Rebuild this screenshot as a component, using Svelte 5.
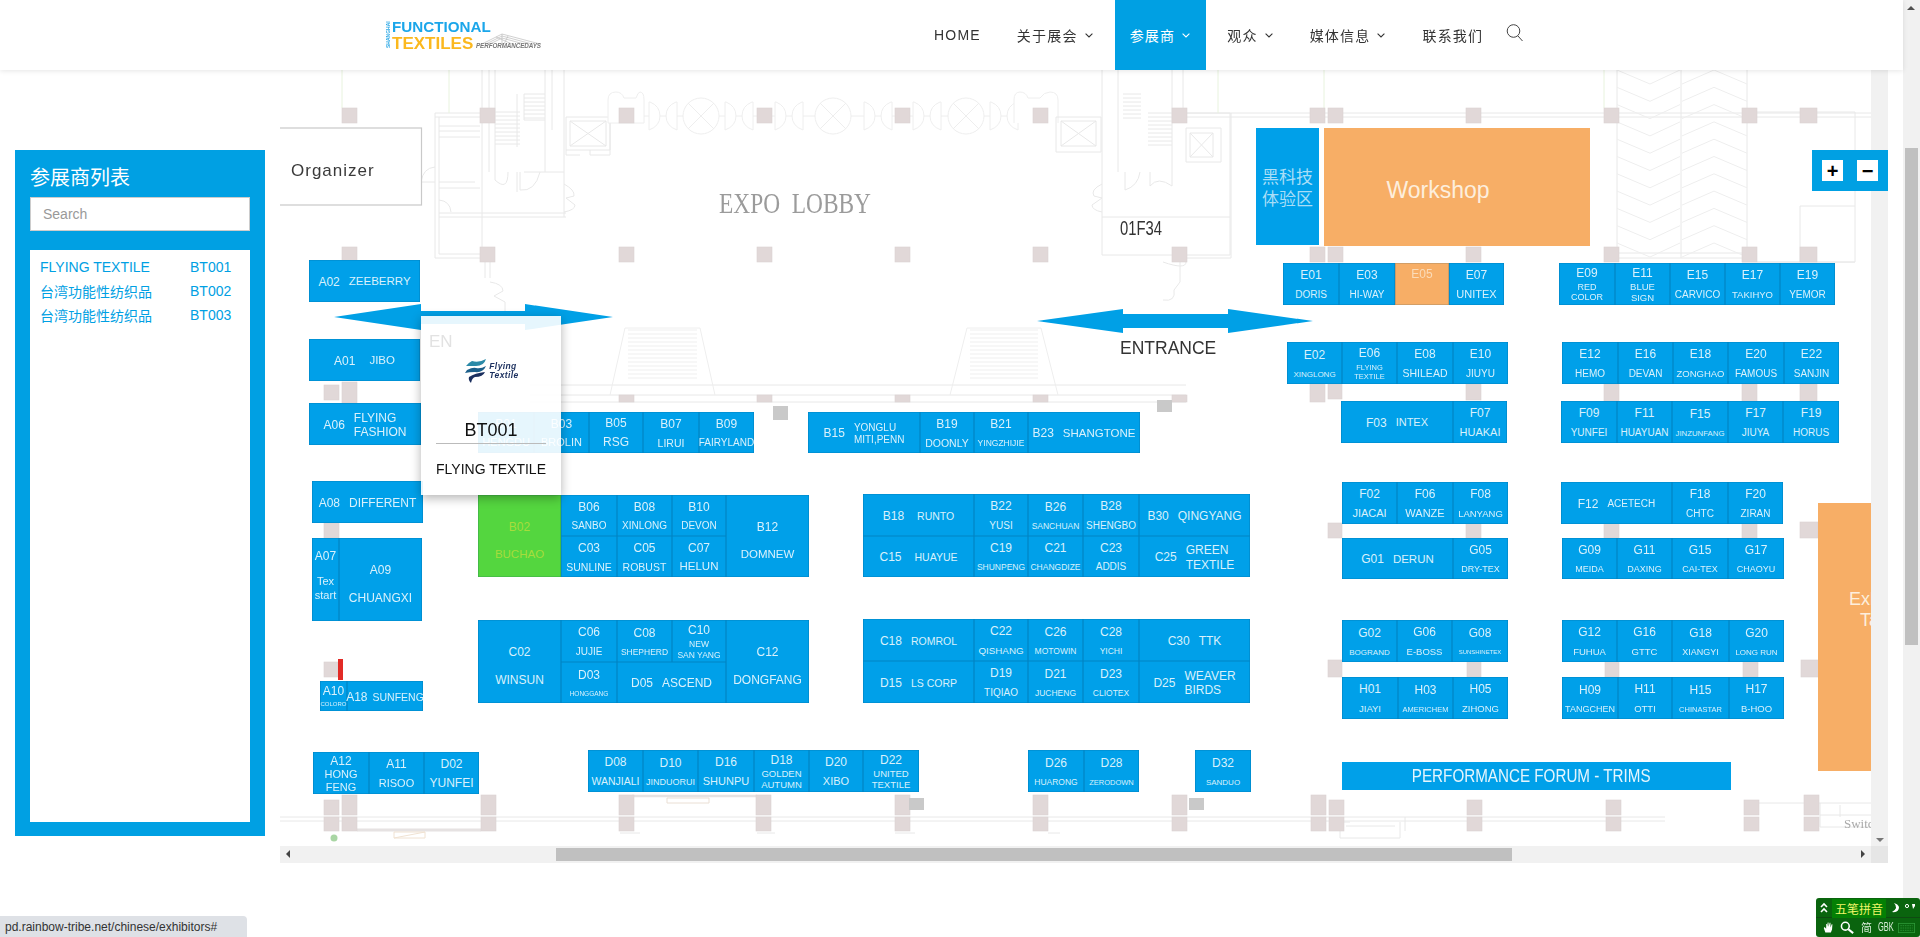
<script lang="ts">
  // map canvas is laid out in the plan's own coordinates, origin is the top left of the visible part
  const OX = 280;
  const OY = 70;

  type Item = [string, string, number?, boolean?, string?, number?];

  function strip(y1: number, y2: number, xs: number[], items: Item[]) {
    return items.map((it, i) => ({
      code: it[0],
      lines: it[1].split("|"),
      fs: it[2] ?? 10,
      row: it[3] ?? false,
      tone: it[4] ?? "",
      gap: it[5] ?? 9,
      x: xs[i] - OX,
      y: y1 - OY,
      w: xs[i + 1] - xs[i],
      h: y2 - y1
    }));
  }

  const booths = [
    ...strip(260, 302, [309, 420], [["A02", "ZEEBERRY", 11.5, true, "", 9]]),
    ...strip(339, 381, [309, 420], [["A01", "JIBO", 11.5, true, "", 14]]),
    ...strip(403, 445, [309, 421], [["A06", "FLYING|FASHION", 12, true]]),
    ...strip(481, 523, [312, 423], [["A08", "DIFFERENT", 12, true]]),
    ...strip(538, 621, [312, 339, 422], [["A07", "Tex|start", 11, false, "stack"], ["A09", "CHUANGXI", 12, false, "tall"]]),
    ...strip(681, 711, [320, 347, 423], [["A10", "COLORO", 6], ["A18", "SUNFENG", 10.5, true, "", 5]]),
    ...strip(752, 794, [313, 369, 424, 479], [["A12", "HONG|FENG", 11], ["A11", "RISOO", 11], ["D02", "YUNFEI", 12]]),
    ...strip(750, 792, [588, 643, 698, 754, 809, 863, 919], [
      ["D08", "WANJIALI", 10.5], ["D10", "JINDUORUI", 9], ["D16", "SHUNPU", 11],
      ["D18", "GOLDEN|AUTUMN", 9.5], ["D20", "XIBO", 11], ["D22", "UNITED|TEXTILE", 9.5]
    ]),
    ...strip(412, 453, [478, 534, 589, 643, 699, 754], [
      ["B01", "HENGDU", 11], ["B03", "BROLIN", 11], ["B05", "RSG", 12], ["B07", "LIRUI", 10.5], ["B09", "FAIRYLAND", 10]
    ]),
    ...strip(412, 453, [808, 920, 974, 1028, 1140], [
      ["B15", "YONGLU|MITI,PENN", 10, true], ["B19", "DOONLY", 10.5], ["B21", "YINGZHIJIE", 8.5], ["B23", "SHANGTONE", 11.5, true]
    ]),
    ...strip(495, 577, [478, 561], [["B02", "BUCHAO", 11.5, false, "green tall"]]),
    ...strip(495, 536, [561, 617, 672, 726], [["B06", "SANBO", 10], ["B08", "XINLONG", 10], ["B10", "DEVON", 10]]),
    ...strip(536, 577, [561, 617, 672, 726], [["C03", "SUNLINE", 10.5], ["C05", "ROBUST", 10.5], ["C07", "HELUN", 11.5]]),
    ...strip(495, 577, [726, 809], [["B12", "DOMNEW", 11.5, false, "tall"]]),
    ...strip(620, 703, [478, 561], [["C02", "WINSUN", 12, false, "tall"]]),
    ...strip(620, 662, [561, 617, 672, 726], [["C06", "JUJIE", 10], ["C08", "SHEPHERD", 8.5], ["C10", "NEW|SAN YANG", 8.5]]),
    ...strip(662, 703, [561, 617, 726], [["D03", "HONGGANG", 6.5], ["D05", "ASCEND", 12, true]]),
    ...strip(620, 703, [726, 809], [["C12", "DONGFANG", 12, false, "tall"]]),
    ...strip(494, 536, [863, 974, 1028, 1083, 1139, 1250], [
      ["B18", "RUNTO", 10.5, true, "", 13], ["B22", "YUSI", 10], ["B26", "SANCHUAN", 8.5], ["B28", "SHENGBO", 10], ["B30", "QINGYANG", 12, true]
    ]),
    ...strip(536, 577, [863, 974, 1028, 1083, 1139, 1250], [
      ["C15", "HUAYUE", 10.5, true, "", 13], ["C19", "SHUNPENG", 8.5], ["C21", "CHANGDIZE", 8.5], ["C23", "ADDIS", 10], ["C25", "GREEN|TEXTILE", 12, true]
    ]),
    ...strip(619, 661, [863, 974, 1028, 1083, 1139, 1250], [
      ["C18", "ROMROL", 10.5, true], ["C22", "QISHANG", 9.8], ["C26", "MOTOWIN", 8.5], ["C28", "YICHI", 8.5], ["C30", "TTK", 12, true]
    ]),
    ...strip(661, 703, [863, 974, 1028, 1083, 1139, 1250], [
      ["D15", "LS CORP", 10.5, true], ["D19", "TIQIAO", 10], ["D21", "JUCHENG", 8.5], ["D23", "CLIOTEX", 8.5], ["D25", "WEAVER|BIRDS", 12, true]
    ]),
    ...strip(750, 792, [1028, 1084, 1139], [["D26", "HUARONG", 8.5], ["D28", "ZERODOWN", 7.5]]),
    ...strip(750, 792, [1195, 1251], [["D32", "SANDUO", 8]]),
    ...strip(263, 305, [1283, 1339, 1395, 1449, 1504], [
      ["E01", "DORIS", 10], ["E03", "HI-WAY", 10], ["E05", "", 10, false, "orange"], ["E07", "UNITEX", 11]
    ]),
    ...strip(263, 305, [1559, 1615, 1670, 1725, 1780, 1835], [
      ["E09", "RED|COLOR", 9], ["E11", "BLUE|SIGN", 9.5], ["E15", "CARVICO", 10], ["E17", "TAKIHYO", 9.5], ["E19", "YEMOR", 10]
    ]),
    ...strip(342, 384, [1287, 1342, 1397, 1453, 1508], [
      ["E02", "XINGLONG", 8], ["E06", "FLYING|TEXTILE", 7.5], ["E08", "SHILEAD", 10.5], ["E10", "JIUYU", 10]
    ]),
    ...strip(342, 384, [1562, 1618, 1673, 1728, 1784, 1839], [
      ["E12", "HEMO", 10], ["E16", "DEVAN", 10], ["E18", "ZONGHAO", 9.5], ["E20", "FAMOUS", 10], ["E22", "SANJIN", 10]
    ]),
    ...strip(401, 443, [1341, 1453, 1507], [["F03", "INTEX", 11, true], ["F07", "HUAKAI", 11]]),
    ...strip(401, 443, [1561, 1617, 1672, 1728, 1783, 1839], [
      ["F09", "YUNFEI", 10], ["F11", "HUAYUAN", 10], ["F15", "JINZUNFANG", 7.8], ["F17", "JIUYA", 10], ["F19", "HORUS", 10]
    ]),
    ...strip(482, 524, [1342, 1397, 1453, 1508], [["F02", "JIACAI", 11], ["F06", "WANZE", 11], ["F08", "LANYANG", 9.5]]),
    ...strip(482, 524, [1561, 1672, 1728, 1783], [["F12", "ACETECH", 10, true], ["F18", "CHTC", 10], ["F20", "ZIRAN", 10]]),
    ...strip(538, 579, [1342, 1453, 1508], [["G01", "DERUN", 11.5, true], ["G05", "DRY-TEX", 9]]),
    ...strip(538, 579, [1562, 1617, 1672, 1728, 1784], [["G09", "MEIDA", 9], ["G11", "DAXING", 9], ["G15", "CAI-TEX", 9], ["G17", "CHAOYU", 9]]),
    ...strip(620, 662, [1342, 1397, 1452, 1508], [["G02", "BOGRAND", 8], ["G06", "E-BOSS", 9.5], ["G08", "SUNSHINETEX", 6]]),
    ...strip(620, 662, [1562, 1617, 1672, 1729, 1784], [["G12", "FUHUA", 9.5], ["G16", "GTTC", 9.5], ["G18", "XIANGYI", 9], ["G20", "LONG RUN", 8]]),
    ...strip(677, 719, [1342, 1398, 1453, 1508], [["H01", "JIAYI", 9.5], ["H03", "AMERICHEM", 7.5], ["H05", "ZIHONG", 9.5]]),
    ...strip(677, 719, [1562, 1618, 1672, 1729, 1784], [["H09", "TANGCHEN", 9], ["H11", "OTTI", 9.5], ["H15", "CHINASTAR", 7.5], ["H17", "B-HOO", 9.5]])
  ];

  // pillars [x, y, w, h], page coordinates
  const colsA = [342, 480, 619, 757, 895, 1033, 1172, 1310, 1328, 1466, 1604, 1742];
  const pillars = [
    ...colsA.map((x) => [x, 108, 15, 15]),
    [1800, 108, 17, 15],
    ...colsA.map((x) => [x, 247, 15, 15]),
    [1800, 247, 17, 15],
    [324, 385, 15, 15], [342, 382, 15, 21], [619, 395, 15, 7], [757, 395, 15, 7], [895, 395, 15, 7], [1033, 395, 15, 7],
    [1172, 395, 15, 7], [1310, 384, 15, 18], [1328, 384, 14, 15], [1466, 384, 15, 16], [1604, 384, 15, 17], [1742, 384, 15, 17], [1800, 384, 17, 17],
    [324, 523, 15, 15], [1328, 523, 14, 15], [1466, 523, 15, 15], [1604, 523, 15, 15], [1742, 523, 15, 15], [1800, 522, 18, 16],
    [324, 662, 14, 15], [1328, 660, 14, 17], [1467, 660, 14, 17], [1605, 660, 14, 17], [1743, 660, 15, 17], [1801, 660, 18, 17],
    [324, 800, 15, 15], [342, 795, 15, 20], [481, 795, 15, 20], [619, 795, 15, 20], [756, 795, 15, 20], [895, 795, 15, 20],
    [1033, 795, 15, 20], [1172, 795, 15, 20], [1311, 795, 15, 20], [1329, 800, 15, 15], [1467, 800, 15, 15], [1606, 800, 15, 15], [1744, 800, 15, 15], [1804, 795, 15, 20],
    [324, 817, 15, 14], [342, 817, 15, 14], [481, 817, 15, 14], [619, 817, 15, 14], [756, 817, 15, 14], [895, 817, 15, 14],
    [1033, 817, 15, 14], [1172, 817, 15, 14], [1311, 817, 15, 14], [1329, 817, 15, 14], [1467, 817, 15, 14], [1606, 817, 15, 14], [1744, 817, 15, 14], [1804, 817, 15, 14]
  ];
  const greys = [[773, 406, 15, 14], [1157, 400, 15, 12], [909, 798, 15, 12], [1189, 798, 15, 12]];

  // D shaped door pairs in the lobby wall
  const doorPairs = [649, 725, 775, 864, 913, 990];
  const rotunda = [701, 833, 966];

  function chevrons() {
    let d = "";
    for (let y = 70; y < 250; y += 17.3) {
      d += `M1617 ${y}L1650 ${y + 14}L1680 ${y}`;
      d += `M1682 ${y + 14}L1714 ${y}L1747 ${y + 14}`;
    }
    return d;
  }

  function stairs(x1: number, x2: number, y1: number, y2: number) {
    let d = "";
    for (let y = y1; y <= y2; y += 4) d += `M${x1} ${y}H${x2}`;
    return d;
  }

  const exhibitors = [
    { name: "FLYING TEXTILE", code: "BT001" },
    { name: "台湾功能性纺织品", code: "BT002" },
    { name: "台湾功能性纺织品", code: "BT003" }
  ];

  const menu = [
    { label: "HOME", caret: false },
    { label: "关于展会", caret: true },
    { label: "参展商", caret: true, active: true },
    { label: "观众", caret: true },
    { label: "媒体信息", caret: true },
    { label: "联系我们", caret: false }
  ];
</script>

<div class="page">
  <div class="main">
    <header class="top">
      <a class="logo" href="#home">
        <span class="logo-side">SHANGHAI</span>
        <span class="logo-words">
          <span class="logo-a">FUNCTIONAL</span>
          <span class="logo-b">
            TEXTILES
            <span class="logo-perf">
              <svg width="64" height="14" viewBox="0 0 64 14">
                <path d="M6 13L26 3L64 13M10 13L26 5L56 13M14 13L26 7L48 13M26 3V13M20 6L36 13M32 5L28 13" fill="none" stroke="#bbb" stroke-width=".7" />
              </svg>
              <em>PERFORMANCEDAYS</em>
            </span>
          </span>
        </span>
      </a>
      <nav class="menu">
        {#each menu as m}
          <a href="#x" class="item" class:active={m.active}>
            {m.label}
            {#if m.caret}
              <svg class="caret" width="8" height="5" viewBox="0 0 8 5"><path d="M.6.7L4 4L7.4.7" fill="none" stroke="currentColor" stroke-width="1.1" /></svg>
            {/if}
          </a>
        {/each}
        <svg class="search" width="18" height="18" viewBox="0 0 18 18">
          <circle cx="7.5" cy="7" r="6.3" fill="none" stroke="#444" stroke-width="1" />
          <path d="M12 12L16.5 17" stroke="#444" stroke-width="1" />
        </svg>
      </nav>
    </header>

    <div class="content">
      <aside class="panel">
        <h3>参展商列表</h3>
        <input class="find" type="text" placeholder="Search" />
        <div class="list">
          {#each exhibitors as e}
            <span>{e.name}</span><span>{e.code}</span>
          {/each}
        </div>
      </aside>

      <section class="map-area">
        <div class="view">
          <div class="canvas">
            <svg class="plan" width="1591" height="776" viewBox="280 70 1591 776">
              <g fill="none" stroke="#e8e8e8" stroke-width="1">
                <!-- left core -->
                <path d="M435 113H480M435 117H480M439 126H480M439 131H480M439 137H480M435 113V258H480M439 117V254H480M439 188H480M439 182H475" />
                <path d="M439 213H566M439 217H566M564 70V217M545 70V172M552 70V130M482 70V254M489 70V172M495 70V172M517 94V147M524 94V120H545M517 172V192M524 172H564" />
                <path d="M566 117H610V150H566ZM570 121H606V146H570ZM570 121L606 146M606 121L570 146M566 150V155H580M590 150V155H610V117" />
                <path d={stairs(495, 520, 112, 147)} />
                <path d={stairs(524, 545, 94, 120)} />
                <path d="M495 172V180Q508 192 508 172M520 172V190Q535 192 540 172M564 184Q575 190 574 196L566 198L575 205Q575 210 564 212M435 167Q423 168 421 182H435M439 200Q450 201 451 212M485 258V278M490 258V278M490 282Q503 284 503 291L494 296L505 302V320M485 320H505" />
                <!-- lobby wall -->
                <g stroke="#eeeeee">
                  <path d="M610 116H1056" />
                  {#each rotunda as x}
                    <circle cx={x} cy="116" r="18" fill="#fff" />
                    <path d={`M${x - 13} 103L${x + 13} 129M${x + 13} 103L${x - 13} 129`} />
                  {/each}
                  {#each doorPairs as x}
                    <path d={`M${x} 102H${x + 1}Q${x + 11} 106 ${x + 11} 116Q${x + 11} 126 ${x} 130ZM${x + 28} 102H${x + 27}Q${x + 17} 106 ${x + 17} 116Q${x + 17} 126 ${x + 28} 130Z`} fill="#fff" />
                  {/each}
                  <path d="M608 123V100Q608 92 616 92Q622 92 624 98H636Q638 92 640 92Q644 92 644 100V123ZM1014 123V100Q1014 92 1020 92Q1026 92 1028 98H1040Q1044 92 1050 92Q1058 92 1058 100V123" fill="#fff" />
                </g>
                <!-- right core -->
                <path d="M1056 117H1101V152H1056ZM1061 121H1096V146H1061ZM1061 121L1096 146M1096 121L1061 146" />
                <path d="M1102 70V255H1230V113H1186M1102 217H1230M1118 70V172M1172 70V172M1183 70V113M1186 128H1221V162H1186ZM1190 133H1213V157H1190ZM1190 133L1213 157M1213 133L1190 157M1186 258H1231V113" />
                <path d={stairs(1123, 1141, 94, 120)} />
                <path d={stairs(1148, 1172, 113, 147)} />
                <path d="M1125 172V190Q1138 186 1140 172M1150 172V186Q1158 176 1172 186V172M1102 184Q1090 190 1094 196L1102 198L1092 205Q1092 210 1102 212M1163 262Q1186 270 1186 262M1163 300Q1176 302 1174 290L1180 282V262" />
                <!-- east wall and store rooms -->
                <path d="M1186 113H1871M1186 117H1871M1757 112H1855V262H1757M1800 206H1855M1800 206V262M1742 262H1855M1604 258H1742M1604 253H1742" />
                <path d="M1617 123V258M1681 70V258M1747 70V258M1617 70V108" />
                <path d={chevrons()} stroke="#eeeeee" />
                <!-- entrance bridges -->
                <path d="M530 385H1186M530 395H1186M530 402H1186" />
                <path d={stairs(628, 697, 330, 378)} stroke="#efefef" />
                <path d={stairs(970, 1038, 330, 378)} stroke="#efefef" />
                <path d="M625 328H700M625 328L610 395M700 328L715 395M967 328H1041M967 328L950 395M1041 328L1058 395" stroke="#eeeeee" />
                <!-- south wall -->
                <path d="M280 817H1665M280 821H1665M1744 803H1871M1820 803V827H1871M1820 815H1871M1340 822V838H1400V822M1346 826H1395M1340 822H1350M1405 817V831M620 833H640M757 833H775M895 833H915M1048 833H1060" />
                <path d="M357 830H481" stroke="#e6e2e2" stroke-width="3" />
                <path d="M632 796H757" stroke="#e6e2e2" stroke-width="2.5" />
                <path d="M667 798H709V803H667Z" stroke="#eadfd4" />
                <path d="M394 832H425V838H394ZM394 838L425 832" stroke="#f0e2d2" />
                <path d="M1840 805V817" />
              </g>
              <g stroke="#e8f3de" fill="none">
                <path d="M342 70V108M449 70V113M1218 70V113M1324 70V108M1604 70V108" />
              </g>
              <rect x="270" y="128" width="151.5" height="77" fill="#fff" stroke="#c9c9c9" stroke-width="1.2" />
              {#each pillars as p}
                <rect x={p[0]} y={p[1]} width={p[2]} height={p[3]} fill="#e1d8d8" stroke="#d9d2d2" stroke-width=".6" />
              {/each}
              {#each greys as p}
                <rect x={p[0]} y={p[1]} width={p[2]} height={p[3]} fill="#c9c9c9" />
              {/each}
              <rect x="338" y="659" width="5" height="21" fill="#e22a26" />
              <circle cx="334" cy="838" r="3.5" fill="#a9d6a4" />
              <polygon points="334,317 421,304 421,311 525,311 525,304 613,317 525,330 525,324 421,324 421,330" fill="#00a0e6" />
              <polygon points="1037,321 1123,309 1123,314 1228,314 1228,309 1313,321 1228,333 1228,328 1123,328 1123,333" fill="#00a0e6" />
              <text class="tx-org" x="291" y="176">Organizer</text>
              <text class="tx-lobby" x="719" y="213" textLength="152" lengthAdjust="spacingAndGlyphs">EXPO  LOBBY</text>
              <text class="tx-num" x="1120" y="235" textLength="42" lengthAdjust="spacingAndGlyphs">01F34</text>
              <text class="tx-entrance" x="1120" y="354">ENTRANCE</text>
              <text class="tx-switch" x="1844" y="828">Switch</text>
            </svg>

            {#each booths as b}
              <div
                class="booth {b.tone}"
                class:inline={b.row}
                style="left:{b.x}px;top:{b.y}px;width:{b.w}px;height:{b.h}px;--fs:{b.fs}px;--gap:{b.gap}px"
              >
                <span class="code">{b.code}</span>
                <span class="name">
                  {#each b.lines as l}<span>{l}</span>{/each}
                </span>
              </div>
            {/each}

            <div class="zone lab" style="left:976px;top:58px;width:63px;height:117px"><span>黑科技</span><span>体验区</span></div>
            <div class="zone shop" style="left:1044px;top:58px;width:266px;height:118px">Workshop</div>
            <div class="zone forum" style="left:1062px;top:692px;width:389px;height:28px"><span>PERFORMANCE FORUM - TRIMS</span></div>
            <div class="zone talk" style="left:1538px;top:433px;width:132px;height:268px"><span>Exhibitor</span><span class="talk-b">Talk</span></div>
          </div>

          <div class="popup">
            <div class="lang">EN</div>
            <div class="brand">
              <svg width="24" height="24" viewBox="0 0 24 24">
                <path d="M9 2Q16 4 23 0Q21 7 13 7Q8 7 3 7Q5 4 9 2Z" fill="#2b8aa8" />
                <path d="M4 11Q10 8 13 9Q18 10 23 7Q20 14 12 13Q6 13 2 14Z" fill="#1c5f8a" />
                <path d="M6 18Q12 14 22 13Q20 18 12 18Q9 19 8 24Q5 21 6 18Z" fill="#1b2f5e" />
              </svg>
              <span>Flying<br />Textile</span>
            </div>
            <div class="pop-code">BT001</div>
            <div class="pop-name">FLYING TEXTILE</div>
          </div>

          <div class="zoom">
            <button type="button">+</button>
            <button type="button">−</button>
          </div>
        </div>

        <div class="vbar"><i class="arr down"></i></div>
        <div class="hbar">
          <i class="arr left"></i>
          <div class="thumb"></div>
          <i class="arr right"></i>
        </div>
        <div class="corner"></div>
      </section>
    </div>
  </div>

  <div class="pagebar">
    <i class="arr up"></i>
    <div class="page-thumb"></div>
  </div>

  <div class="status">pd.rainbow-tribe.net/chinese/exhibitors#</div>

  <div class="ime">
    <div class="ime-top">
      <span class="ime-up">
        <svg width="8" height="12" viewBox="0 0 8 12"><path d="M1 5L4 2L7 5M1 10L4 7L7 10" fill="none" stroke="#fff" stroke-width="1.6" /></svg>
      </span>
      <span class="ime-mode">五笔拼音</span>
      <span class="ime-marks">
        <svg width="26" height="12" viewBox="0 0 26 12">
          <path d="M4 1Q9 6 2 10Q9 11 9 5Q8 2 4 1Z" fill="#fff" />
          <circle cx="17" cy="4" r="1.6" fill="none" stroke="#fff" />
          <path d="M22 2H25V4L23 7Z" fill="#fff" />
        </svg>
      </span>
    </div>
    <div class="ime-bottom">
      <svg width="11" height="13" viewBox="0 0 14 15"><path d="M3 14L1 8L2 7L4 9V3H5V7L6 1H7V7L8.5 1.500H9.500V7.500L11 3.500H12L11.500 10L10 14Z" fill="#fff" /></svg>
      <svg width="15" height="13" viewBox="0 0 17 15"><circle cx="6" cy="6" r="4.500" fill="none" stroke="#fff" stroke-width="1.800" /><path d="M9.500 9.500L15 14" stroke="#fff" stroke-width="2.400" /></svg>
      <span class="ime-txt">简</span>
      <span class="ime-txt gbk">GBK</span>
      <svg width="17" height="12" viewBox="0 0 22 13"><rect x=".5" y=".5" width="21" height="12" fill="none" stroke="#2f9a3a" /><path d="M3 3.500H19M3 6.500H19M3 9.500H19" stroke="#2f9a3a" stroke-dasharray="2 1" /></svg>
    </div>
  </div>
</div>

<style>
  :global(html), :global(body) { margin: 0; height: 100%; overflow: hidden; background: #fff; }
  * { box-sizing: border-box; }

  .page { display: flex; height: 937px; position: relative; font-family: "Liberation Sans", "Noto Sans CJK SC", sans-serif; }
  .main { flex: 1; min-width: 0; }

  .top { position: relative; z-index: 5; height: 70px; background: #fff; box-shadow: 0 1px 5px rgba(0,0,0,.1); display: flex; align-items: center; padding-left: 385px; }
  .logo { display: flex; width: 534px; height: 32px; text-decoration: none; align-items: stretch; filter: blur(.4px); }
  .logo-side { writing-mode: vertical-rl; transform: rotate(180deg); font-size: 5px; font-weight: 700; color: #2fa9e6; width: 6px; text-align: center; line-height: 6px; }
  .logo-words { display: flex; flex-direction: column; font-weight: 700; line-height: 16.5px; margin-left: 1px; }
  .logo-a { color: #1ba6ea; height: 16.500px; font-size: 15.200px; }
  .logo-b { color: #fbb81e; display: flex; position: relative; font-size: 17px; }
  .logo-perf { position: absolute; left: 84px; top: -5px; width: 64px; height: 24px; }
  .logo-perf svg { display: block; }
  .logo-perf em { display: block; font-size: 6.300px; line-height: 8px; margin-top: -3px; color: #777; font-weight: 700; white-space: nowrap; letter-spacing: -.1px; }

  .menu { display: flex; gap: 6px; height: 70px; align-items: center; }
  .item { display: flex; align-items: center; height: 70px; padding: 0 15px; color: #333; font-size: 14px; letter-spacing: 1.200px; text-decoration: none; white-space: nowrap; }
  .item.active { background: #00a0e3; color: #fff; }
  .caret { margin-left: 6px; width: 10px; }
  .search { margin: -4px 0 0 2px; }

  .content { display: flex; align-items: flex-start; }
  .panel { width: 250px; height: 686px; margin: 80px 0 0 15px; padding: 0 15px; background: #00a0e3; display: flex; flex-direction: column; }
  .panel h3 { margin: 17px 0 7px; font-size: 20px; line-height: 23px; font-weight: 400; color: #fff; }
  .find { height: 34px; border: 1px solid #ccc; padding: 0 12px; font: 14px "Liberation Sans", sans-serif; background: #fff; outline: none; }
  .find::placeholder { color: #999; opacity: 1; }
  .list { margin-top: 19px; height: 572px; background: #fff; padding: 5px 10px; display: grid; grid-template-columns: 150px 1fr; grid-auto-rows: 24px; align-content: start; align-items: center; font-size: 14px; color: #00a0e3; }

  .map-area { margin-left: 15px; display: grid; grid-template-columns: 1591px 17px; grid-template-rows: 776px 17px; }
  .view { position: relative; overflow: visible; }
  .canvas { position: absolute; inset: 0; overflow: hidden; filter: blur(.4px); }
  .plan { position: absolute; left: 0; top: 0; }
  .tx-org { font: 17px "Liberation Sans", sans-serif; letter-spacing: 1px; fill: #3a3a3a; }
  .tx-lobby { font: 30px "Liberation Serif", serif; fill: #9b9b9b; white-space: pre; }
  .tx-num { font: 20px "Liberation Sans", sans-serif; fill: #333; }
  .tx-entrance { font: 17.500px "Liberation Sans", sans-serif; fill: #333; }
  .tx-switch { font: 13px "Liberation Serif", serif; fill: #aaa; }

  .booth { position: absolute; background: #00a0e9; color: #d9f1fc; box-shadow: inset 0 0 0 .6px rgba(0,70,110,.3); display: flex; flex-direction: column; align-items: center; justify-content: space-around; padding: 3px 0 1px; text-align: center; }
  .booth.inline { flex-direction: row; justify-content: center; gap: var(--gap); }
  .booth.tall { justify-content: center; gap: 14px; padding-top: 11px; }
  .booth.stack { justify-content: flex-start; gap: 11px; padding-top: 12px; }
  .booth.stack .name { line-height: 14px; }
  .booth.green { background: #54d63f; color: #a7dc3c; }
  .booth.orange { background: #f7ae66; color: #fbdcb9; justify-content: flex-start; padding-top: 5px; }
  .code { font-size: 12px; line-height: 13px; }
  .name { font-size: var(--fs); line-height: 1.200; display: flex; flex-direction: column; white-space: nowrap; }
  .inline .name { text-align: left; }

  .zone { position: absolute; display: flex; flex-direction: column; align-items: center; justify-content: center; text-align: center; color: #fff; }
  .lab { background: #00a0e9; color: #a9def7; font: 17px/22px "Noto Sans CJK SC", sans-serif; }
  .shop { background: #f7ae66; color: #fdeedd; font-size: 23px; padding: 7px 38px 0 0; }
  .forum { background: #00a0e9; color: #e4f5fd; font-size: 19px; padding-right: 10px; }
  .forum span { transform: scaleX(.8); white-space: nowrap; }
  .talk { background: #f7ae66; color: #fdeedd; font-size: 18px; line-height: 21px; padding-bottom: 55px; }
  .talk-b { margin-right: 16px; }

  .popup { position: absolute; left: 141px; top: 246px; width: 140px; height: 179px; background: rgba(255,255,255,.9); box-shadow: 0 3px 10px rgba(0,0,0,.3); text-align: center; z-index: 2; padding: 15px 15px 0; color: #111; }
  .lang { position: absolute; left: 8px; top: 16px; font-size: 17px; line-height: 20px; color: #e2e2e2; }
  .brand { display: flex; justify-content: center; align-items: center; gap: 2px; margin: 28px 0 0; height: 24px; }
  .brand span { font-size: 8.500px; line-height: 9.500px; font-weight: 700; font-style: italic; color: #1b2f5e; text-align: left; letter-spacing: .4px; }
  .pop-code { margin-top: 33px; padding-bottom: 1px; height: 28px; line-height: 28px; font-size: 18px; border-bottom: 1px solid #bbb; }
  .pop-name { margin-top: 15px; font-size: 14px; line-height: 20px; white-space: nowrap; }

  .zoom { position: absolute; z-index: 3; left: 1532px; top: 80px; width: 76px; height: 41px; background: #00a0e3; display: flex; gap: 14px; padding: 10px; }
  .zoom button { width: 21px; height: 21px; padding: 0; border: 0; background: #fff; color: #000; font: 700 20px/20px "Liberation Sans", sans-serif; }

  .vbar { background: #f1f1f1; position: relative; }
  .hbar { background: #f1f1f1; position: relative; display: flex; align-items: center; }
  .thumb { position: absolute; left: 276px; width: 956px; top: 2px; bottom: 2px; background: #c0c0c0; }
  .corner { background: #e6e6e6; }

  .arr { position: absolute; width: 0; height: 0; border-style: solid; border-color: transparent; }
  .arr.down { left: 5px; bottom: 4px; border-width: 4px 4px 0; border-top-color: #777; }
  .arr.left { left: 6px; top: 4px; border-width: 4px 4px 4px 0; border-right-color: #444; }
  .arr.right { right: 6px; top: 4px; border-width: 4px 0 4px 4px; border-left-color: #444; }
  .arr.up { left: 4px; top: 6px; border-width: 0 4px 4px; border-bottom-color: #505050; }

  .pagebar { width: 17px; background: #f1f1f1; position: relative; }
  .page-thumb { position: absolute; left: 2px; right: 2px; top: 148px; height: 497px; background: #c0c0c0; }

  .status { position: absolute; left: 0; bottom: 0; width: 247px; height: 21px; background: #dee1e6; border-top-right-radius: 4px; padding-left: 5px; font-size: 12px; line-height: 22px; color: #333; z-index: 6; white-space: nowrap; }

  .ime { position: absolute; z-index: 6; right: 0; bottom: 0; width: 104px; height: 39px; background: #0a640e; border-radius: 3px; padding: 1px 0 0 0; display: flex; flex-direction: column; }
  .ime-top { display: flex; height: 19px; align-items: center; border-bottom: 1px solid #0f4a12; }
  .ime-up { width: 16px; display: flex; justify-content: center; }
  .ime-mode { width: 54px; height: 19px; background: #048004; color: #f0f56a; font: 12px/19px "Noto Sans CJK SC", sans-serif; text-align: center; white-space: nowrap; }
  .ime-marks { flex: 1; display: flex; justify-content: center; }
  .ime-bottom { display: flex; align-items: center; gap: 6px; flex: 1; padding: 0 0 0 7px; }
  .ime-txt { color: #d9ecd9; font: 11px/15px "Noto Sans CJK SC", sans-serif; }
  .gbk { width: 14px; font: 12px/15px "Liberation Sans", sans-serif; transform: scaleX(.62); transform-origin: left; }
</style>
